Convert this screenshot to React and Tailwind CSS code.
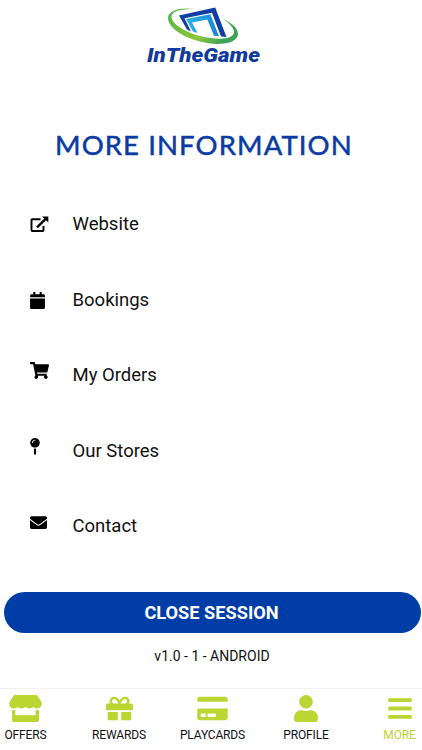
import { FaStore, FaGift, FaCreditCard, FaUser, FaBars, FaCalendar, FaShoppingCart, FaMapPin, FaEnvelope } from 'react-icons/fa';

function Logo() {
  return (
    <svg className="mx-auto block h-[70px] w-[130px]" viewBox="0 0 130 70" role="img" aria-label="InTheGame">
      <defs>
        <linearGradient id="ring" x1="0" y1="0" x2="1" y2="0.4">
          <stop offset="0" stopColor="#4bb554" />
          <stop offset="0.3" stopColor="#6cbe3c" />
          <stop offset="0.65" stopColor="#8cc83a" />
          <stop offset="1" stopColor="#3da35a" />
        </linearGradient>
        <linearGradient id="inner" x1="0" y1="0" x2="1" y2="0">
          <stop offset="0" stopColor="#27b4e6" />
          <stop offset="1" stopColor="#1c86cf" />
        </linearGradient>
      </defs>
      <path fill="url(#ring)" d="M55 9 C41 7 28 10 28 18 C28 30 52 43 77 44 C90 44 98 40 98 34 C98 28 92 23 83 19 C90 24 94 28 94 32 C94 37 86 39.5 76 38.5 C53 37 32 26 31.5 17 C31 11 41 9 55 9Z" />
      <path fill="#103ea5" d="M39 15.5 L75.2 7.5 L86.5 37 L81 36.5 L72 12.8 L44.5 18.2 L51 31.5 L47 29.5Z" />
      <path fill="url(#inner)" d="M46 19 L70.3 14.3 L79 36.3 L74 35.8 L67.3 19.5 L52 22.5 L57.5 33 L53 31.5Z" />
      <text x="7" y="62" fill="#103a9b" fontFamily="Roboto, 'Liberation Sans', sans-serif" fontStyle="italic" fontWeight="900" fontSize="20.5" textLength="113" lengthAdjust="spacingAndGlyphs">InTheGame</text>
    </svg>
  );
}

function LinkOutIcon({ className }) {
  return (
    <svg className={className} viewBox="0 0 19 17" fill="none" stroke="currentColor">
      <path d="M10.5 3.2H2.2Q1.5 3.2 1.5 3.9V14.3Q1.5 15 2.2 15H12.8Q13.5 15 13.5 14.3V10" strokeWidth="1.9" />
      <path d="M7 11.3L15.5 3.2" strokeWidth="2.5" />
      <path d="M12 .5H18.3V6.5Z" fill="currentColor" stroke="none" />
    </svg>
  );
}

const links = [
  { label: 'Website', Icon: LinkOutIcon, size: 'w-[19px] h-[17px]' },
  { label: 'Bookings', Icon: FaCalendar, size: 'w-[15px] h-[17px]' },
  { label: 'My Orders', Icon: FaShoppingCart, size: 'w-[19px] h-[17px] mb-[10px]' },
  { label: 'Our Stores', Icon: FaMapPin, size: 'w-[10px] h-[17px] mb-[10px]' },
  { label: 'Contact', Icon: FaEnvelope, size: 'w-[17px] h-[17px] mb-[10px]' },
];

const tabs = [
  { label: 'OFFERS', Icon: FaStore, size: 'w-[33px]' },
  { label: 'REWARDS', Icon: FaGift, size: 'w-[27px]' },
  { label: 'PLAYCARDS', Icon: FaCreditCard, size: 'w-[31px]' },
  { label: 'PROFILE', Icon: FaUser, size: 'w-[24px]' },
  { label: 'MORE', Icon: FaBars, size: 'w-[24px]', active: true },
];

export default function App() {
  return (
    <div className="flex h-[750px] w-[422px] flex-col overflow-hidden bg-white font-['Roboto',sans-serif] text-[#111]">
      <header className="pr-[12px]">
        <Logo />
      </header>

      <h1 className="mt-[55px] ml-[55px] whitespace-nowrap font-['Lato',sans-serif] text-[27.5px] leading-[40px] tracking-[1.1px] text-[#0a3ba2] [-webkit-text-stroke:0.5px_#0a3ba2]">
        MORE INFORMATION
      </h1>

      <nav className="mt-[22px] flex flex-col">
        {links.map(({ label, Icon, size }) => (
          <a key={label} href="#" className="flex h-[75.6px] items-center pl-[30px]">
            <span className="w-[42.5px]">
              <Icon className={`${size} text-black`} />
            </span>
            <span className="text-[18.5px]">{label}</span>
          </a>
        ))}
      </nav>

      <button className="mt-[27px] ml-[4px] h-[41px] w-[417px] shrink-0 rounded-full bg-[#003da6] pr-[2px] text-[18.2px] font-bold text-white">
        CLOSE SESSION
      </button>
      <p className="mt-[13px] pl-[2px] text-center text-[14px] leading-[20px]">v1.0 - 1 - ANDROID</p>

      <footer className="mt-auto flex h-[62px] justify-between border-t border-[#f1f1f1] pl-[3px]">
        {tabs.map(({ label, Icon, size, active }) => (
          <a key={label} href="#" className="flex w-[45px] flex-col items-center pt-[6px]">
            <Icon className={`h-[27px] shrink-0 text-[#bbd531] ${size}`} />
            <span className={`mt-[5px] whitespace-nowrap text-[12px] leading-[16px] tracking-[-0.15px] ${active ? 'text-[#bbd531]' : ''}`}>{label}</span>
          </a>
        ))}
      </footer>
    </div>
  );
}
